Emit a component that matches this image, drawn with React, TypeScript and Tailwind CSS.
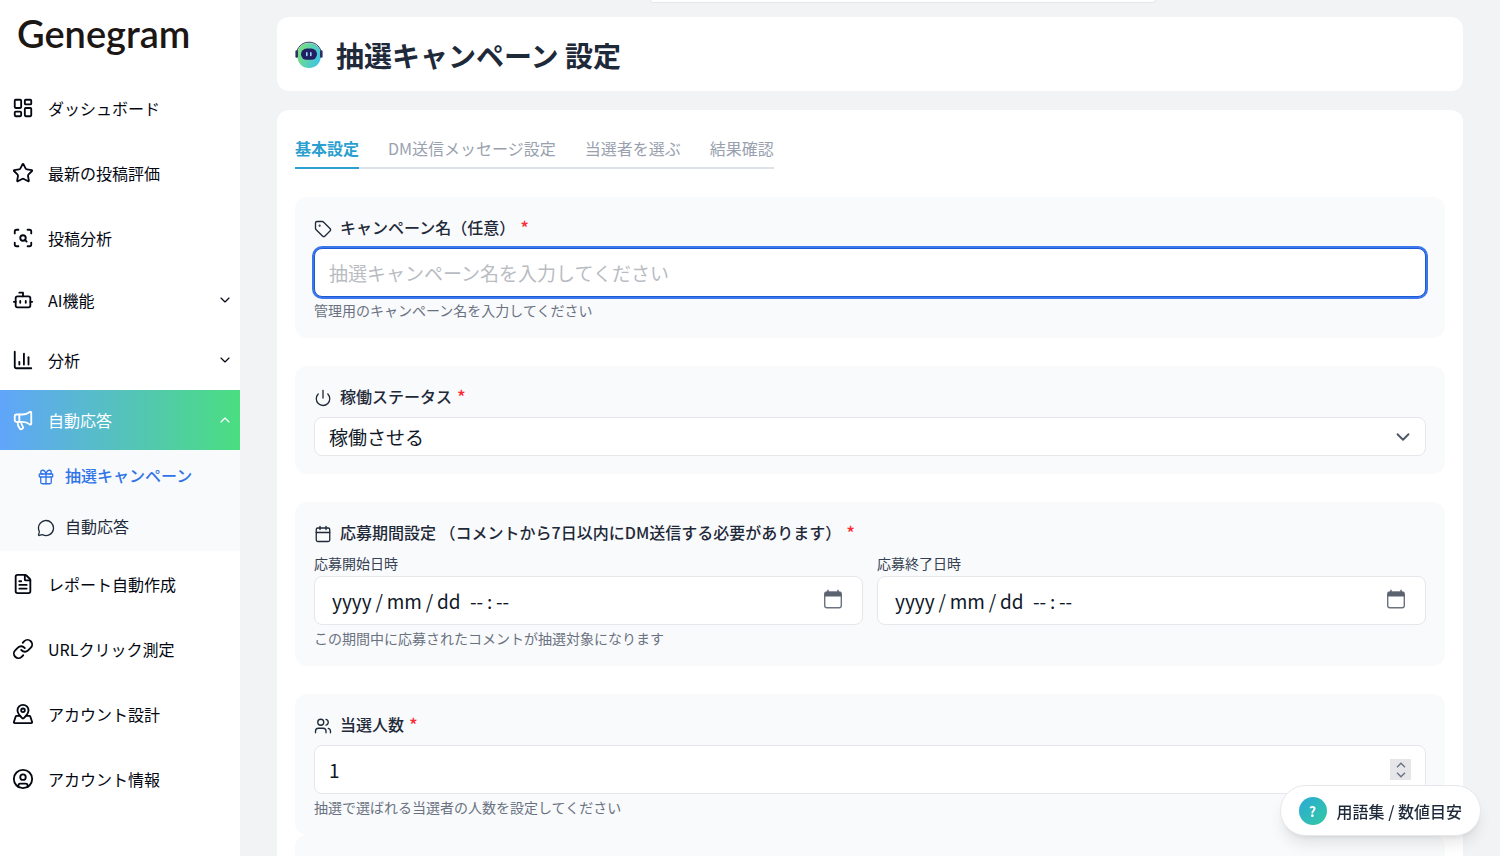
import React, { useState } from 'react';
import {
  Bot,
  Calendar,
  ChartColumn,
  ChevronDown,
  ChevronUp,
  CircleUser,
  FileText,
  Gift,
  LayoutDashboard,
  Link,
  LucideIcon,
  MapPinned,
  Megaphone,
  MessageCircle,
  Power,
  ScanSearch,
  Star,
  Tag,
  Users,
} from 'lucide-react';

interface NavLinkProps {
  icon: LucideIcon;
  label: string;
}

const NavLink: React.FC<NavLinkProps> = ({ icon: Icon, label }) => (
  <a href="#" className="flex h-[65px] items-center gap-3.5 px-3 text-base text-gray-950">
    <Icon size={22} />
    {label}
  </a>
);

interface NavGroupProps extends NavLinkProps {
  open?: boolean;
}

const NavGroup: React.FC<NavGroupProps> = ({ icon: Icon, label, open = false }) => (
  <button
    type="button"
    aria-expanded={open}
    className={
      open
        ? 'flex h-15 w-full items-center gap-3.5 bg-linear-to-r/srgb from-[#60a5fa] to-[#4ade80] pr-[7px] pl-3 text-base text-white'
        : 'flex h-15 w-full items-center gap-3.5 pr-[7px] pl-3 text-base text-gray-950'
    }
  >
    <Icon size={22} />
    <span className="flex-1 text-left">{label}</span>
    {open ? <ChevronUp size={16} strokeWidth={1.75} /> : <ChevronDown size={16} strokeWidth={1.75} />}
  </button>
);

const Sidebar: React.FC = () => (
  <aside className="w-60 shrink-0 bg-white">
    <div className="flex h-[75px] items-start px-[17px] pt-2 font-['Lato',sans-serif] text-[38px] leading-[50px] font-semibold text-[#1c1614]">
      Genegram
    </div>
    <nav>
      <NavLink icon={LayoutDashboard} label="ダッシュボード" />
      <NavLink icon={Star} label="最新の投稿評価" />
      <NavLink icon={ScanSearch} label="投稿分析" />
      <NavGroup icon={Bot} label="AI機能" />
      <NavGroup icon={ChartColumn} label="分析" />
      <NavGroup icon={Megaphone} label="自動応答" open />
      <div className="flex flex-col gap-px bg-[#f8fafc]">
        <a href="#" className="flex h-[50px] items-center gap-2.5 pl-[37px] text-base font-medium text-[#2f73e8]">
          <Gift size={18} strokeWidth={1.75} className="mt-1" />
          抽選キャンペーン
        </a>
        <a href="#" className="flex h-[50px] items-center gap-2.5 pl-[37px] text-base text-gray-800">
          <MessageCircle size={18} strokeWidth={1.75} className="mt-1" />
          自動応答
        </a>
      </div>
      <NavLink icon={FileText} label="レポート自動作成" />
      <NavLink icon={Link} label="URLクリック測定" />
      <NavLink icon={MapPinned} label="アカウント設計" />
      <NavLink icon={CircleUser} label="アカウント情報" />
    </nav>
  </aside>
);

const RobotIcon: React.FC = () => (
  <svg width="28" height="28" viewBox="0 0 28 28" aria-hidden="true">
    <defs>
      <linearGradient id="robot-face" x1="0" y1="0.3" x2="1" y2="0.7">
        <stop offset="0" stopColor="#7be07a" />
        <stop offset="1" stopColor="#3cc3ea" />
      </linearGradient>
    </defs>
    <path d="M14 2c7 0 12 4.800 12 12.200S21 27 14 27 2.300 22 2.300 14.200 7 2 14 2z" fill="url(#robot-face)" />
    <path d="M2 10C3.800 4.600 8.200 1.200 14 1.200S24.200 4.600 26 10" fill="none" stroke="#1d2558" strokeWidth="0.900" />
    <rect x="0.400" y="9.200" width="2.600" height="7.600" rx="1.200" fill="#2b3263" />
    <rect x="25" y="9.200" width="2.600" height="7.600" rx="1.200" fill="#2b3263" />
    <rect x="6" y="7.600" width="16" height="11.200" rx="5.600" fill="#211f63" />
    <rect x="11" y="11" width="1.600" height="4.200" rx="0.800" fill="#9fd8f5" />
    <rect x="15" y="11" width="1.600" height="4.200" rx="0.800" fill="#9fd8f5" />
  </svg>
);

const PickerIcon: React.FC = () => (
  <svg width="20" height="20" viewBox="0 0 20 20" fill="none" aria-hidden="true">
    <rect x="1.700" y="3" width="16.600" height="15.800" rx="2.200" stroke="#6b7280" strokeWidth="1.400" />
    <path d="M1.700 7.400V5a2 2 0 0 1 2-2h12.600a2 2 0 0 1 2 2v2.400z" fill="#5b6270" />
    <path d="M5 0.800v2.500M15 0.800v2.500" stroke="#5b6270" strokeWidth="1.400" />
  </svg>
);

const tabs = ['基本設定', 'DM送信メッセージ設定', '当選者を選ぶ', '結果確認'];

const Section: React.FC<{ children?: React.ReactNode }> = ({ children }) => (
  <section className="rounded-xl bg-[#f9fafb] px-[19px] py-[18px]">{children}</section>
);

interface FieldLabelProps {
  icon: LucideIcon;
  htmlFor: string;
  children: React.ReactNode;
}

const FieldLabel: React.FC<FieldLabelProps> = ({ icon: Icon, htmlFor, children }) => (
  <label htmlFor={htmlFor} className="mb-[9px] flex h-6 items-center text-base font-medium text-gray-800">
    <Icon size={18} strokeWidth={1.75} className="mt-1 mr-2" />
    {children}
    <span className="ml-[5px] text-lg leading-6 font-medium text-red-500">*</span>
  </label>
);

const Hint: React.FC<{ children: React.ReactNode }> = ({ children }) => (
  <p className="mt-1 mb-px text-sm leading-[18px] text-gray-500">{children}</p>
);

const DateField: React.FC<{ id: string; label: string }> = ({ id, label }) => (
  <div>
    <label htmlFor={id} className="mb-[3px] block text-sm leading-5 text-gray-700">
      {label}
    </label>
    <div className="flex h-[49px] items-center rounded-lg border border-gray-200 bg-white pr-[19px] pl-[17px]">
      <input
        id={id}
        type="text"
        placeholder={'yyyy\u2009/\u2009mm\u2009/\u2009dd\u2002--\u2009:\u2009--'}
        className="min-w-0 flex-1 pt-0.5 text-[19px] text-gray-900 outline-none placeholder:text-gray-900"
      />
      <button type="button" aria-label={`${label}を選択`} className="mb-1">
        <PickerIcon />
      </button>
    </div>
  </div>
);

const App: React.FC = () => {
  const [activeTab, setActiveTab] = useState(tabs[0]);
  const [winners, setWinners] = useState(1);

  return (
    <div className="flex h-screen overflow-hidden bg-[#f2f3f5] font-['Noto_Sans_CJK_JP',sans-serif]">
      <Sidebar />

      <main className="min-w-0 flex-1 px-[37px]">
        <div className="mb-3.5 ml-[373px] h-[3px] w-[506px] rounded-b-md border border-t-0 border-gray-200 bg-white" />

        <header className="flex h-[74px] items-center gap-[13px] rounded-xl bg-white px-[18px] pt-0.5">
          <RobotIcon />
          <h1 className="text-[28px] leading-9 font-bold text-gray-800">抽選キャンペーン 設定</h1>
        </header>

        <div className="mt-[19px] rounded-xl bg-white p-[18px]">
          <div role="tablist" className="mb-7 flex w-fit gap-[29px] shadow-[inset_0_-2px_0_#dde1e8]">
            {tabs.map((tab) => (
              <button
                key={tab}
                type="button"
                role="tab"
                aria-selected={tab === activeTab}
                onClick={() => setActiveTab(tab)}
                className={
                  tab === activeTab
                    ? 'h-[41px] border-b-2 border-[#2b9fd0] pt-px text-base font-bold text-[#2b9fd0]'
                    : 'h-[41px] border-b-2 border-transparent pt-px text-base text-gray-400'
                }
              >
                {tab}
              </button>
            ))}
          </div>

          <form className="flex flex-col gap-7">
            <Section>
              <FieldLabel icon={Tag} htmlFor="campaign-name">キャンペーン名（任意）</FieldLabel>
              <input
                id="campaign-name"
                type="text"
                placeholder="抽選キャンペーン名を入力してください"
                className="block h-[49px] w-full rounded-lg border border-[#1d5bd6] bg-white px-3.5 text-[19px] text-gray-900 ring-2 ring-[#3b76ea] outline-none placeholder:text-[#b9bcc2]"
              />
              <Hint>管理用のキャンペーン名を入力してください</Hint>
            </Section>

            <Section>
              <FieldLabel icon={Power} htmlFor="status">稼働ステータス</FieldLabel>
              <div className="relative">
                <select
                  id="status"
                  className="block h-[39px] w-full appearance-none rounded-lg border border-gray-200 bg-white px-3.5 text-[19px] leading-7 text-gray-900"
                >
                  <option>稼働させる</option>
                  <option>停止する</option>
                </select>
                <ChevronDown size={22} className="pointer-events-none absolute inset-y-0 right-3 my-auto text-gray-600" />
              </div>
            </Section>

            <Section>
              <FieldLabel icon={Calendar} htmlFor="start-at">
                応募期間設定 （コメントから7日以内にDM送信する必要があります）
              </FieldLabel>
              <div className="grid grid-cols-2 gap-3.5">
                <DateField id="start-at" label="応募開始日時" />
                <DateField id="end-at" label="応募終了日時" />
              </div>
              <Hint>この期間中に応募されたコメントが抽選対象になります</Hint>
            </Section>

            <div className="flex flex-col">
              <Section>
                <FieldLabel icon={Users} htmlFor="winners">当選人数</FieldLabel>
                <div className="flex h-[49px] items-center rounded-lg border border-gray-200 bg-white px-3.5">
                  <input
                    id="winners"
                    type="number"
                    min={1}
                    value={winners}
                    onChange={(e) => setWinners(Number(e.target.value))}
                    className="min-w-0 flex-1 appearance-none pt-0.5 text-[19px] text-gray-900 outline-none [&::-webkit-inner-spin-button]:appearance-none"
                  />
                  <div className="flex h-[21px] w-[21px] flex-col items-center justify-center gap-1 bg-[#e6e6e9] text-gray-500">
                    <button type="button" aria-label="増やす" onClick={() => setWinners(winners + 1)}>
                      <svg width="10" height="6" viewBox="0 0 10 6" fill="none" stroke="currentColor" strokeWidth="1.4" className="block">
                        <path d="M1 5.200l4-4 4 4" />
                      </svg>
                    </button>
                    <button type="button" aria-label="減らす" onClick={() => setWinners(Math.max(1, winners - 1))}>
                      <svg width="10" height="6" viewBox="0 0 10 6" fill="none" stroke="currentColor" strokeWidth="1.4" className="block">
                        <path d="M1 0.800l4 4 4-4" />
                      </svg>
                    </button>
                  </div>
                </div>
                <Hint>抽選で選ばれる当選者の人数を設定してください</Hint>
              </Section>
              <Section>
                <div className="h-20" />
              </Section>
            </div>
          </form>
        </div>
      </main>

      <button
        type="button"
        className="fixed right-[19px] bottom-5 flex h-[51px] items-center gap-2.5 rounded-full border border-gray-200 bg-white px-[18px] text-base font-medium text-gray-800 shadow-lg"
      >
        <span className="flex h-7 w-7 items-center justify-center rounded-full bg-linear-to-br from-[#2fa9d6] to-[#34c9a0] text-sm font-bold text-white">
          ?
        </span>
        用語集 / 数値目安
      </button>
    </div>
  );
};

export default App;
